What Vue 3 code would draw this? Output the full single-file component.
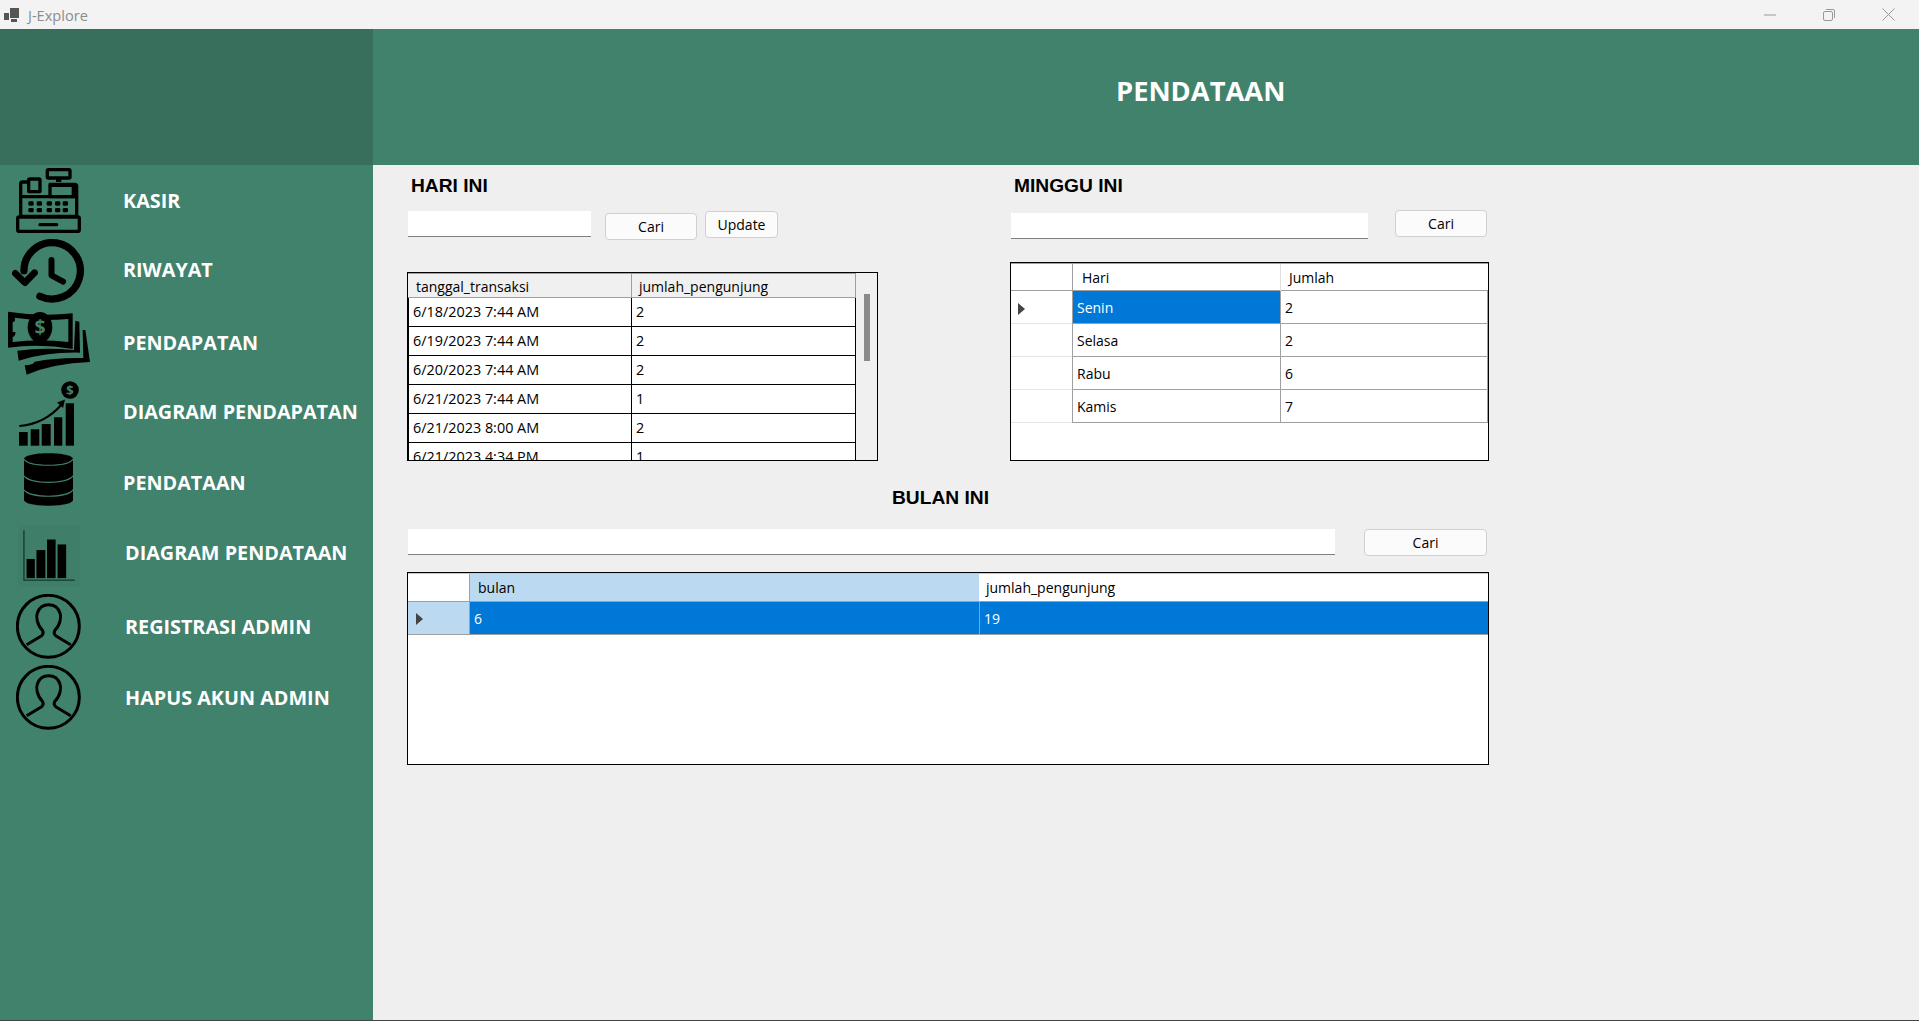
<template>
  <div class="window">
    <header class="titlebar">
      <svg class="app-icon" viewBox="0 0 15 14" width="15" height="14">
        <rect x="0" y="5" width="5" height="7" fill="#555" />
        <rect x="6" y="0" width="9" height="10" fill="#555" />
        <rect x="7" y="11" width="6" height="3" fill="#555" />
      </svg>
      <span class="app-name">J-Explore</span>
      <div class="controls">
        <svg viewBox="0 0 12 12" width="12" height="12"><path d="M0 6h12" stroke="#999" fill="none" /></svg>
        <svg viewBox="0 0 12 12" width="12" height="12">
          <rect x="0.5" y="2.5" width="9" height="9" rx="1.5" stroke="#999" fill="none" />
          <path d="M3 0.5h7a1.5 1.5 0 0 1 1.5 1.5v7" stroke="#999" fill="none" />
        </svg>
        <svg viewBox="0 0 13 13" width="13" height="13"><path d="M0.5 0.5l12 12M12.5 0.5l-12 12" stroke="#999" fill="none" /></svg>
      </div>
    </header>

    <div class="body">
      <aside class="sidebar">
        <div class="logo-block"></div>
        <nav class="menu">
          <div v-for="item in menu" :key="item.label" class="menu-item" :class="item.cls">
            <div class="menu-icon">
              <!-- kasir -->
              <svg v-if="item.icon === 'cash'" viewBox="0 0 195 195" width="65" height="65">
                <g fill="none" stroke="#000" stroke-width="10" stroke-linejoin="round">
                  <rect x="94" y="5" width="68" height="25" rx="3" />
                  <rect x="38" y="33" width="34" height="38" rx="3" />
                  <path d="M38 42h-18a6 6 0 0 0-6 6v97h168v-90a6 6 0 0 0-6-6h-78" />
                  <path d="M14 86h168" />
                  <rect x="102" y="52" width="70" height="34" />
                  <rect x="5" y="147" width="185" height="43" rx="5" />
                </g>
                <rect x="120" y="30" width="16" height="12" />
                <rect x="67" y="165" width="60" height="10" rx="5" />
                <g>
                  <rect v-for="k in keys" :key="k.id" :x="k.x" :y="k.y" width="16" height="13" rx="4" />
                </g>
              </svg>
              <!-- riwayat -->
              <svg v-else-if="item.icon === 'history'" viewBox="36 717 220 195" width="73" height="65">
                <g fill="none" stroke="#000" stroke-linecap="round" stroke-linejoin="round">
                  <path d="M120 889 A 85 85 0 1 0 72 812" stroke-width="22" />
                  <path d="M46 820 L75 848 L104 818" stroke-width="20" />
                  <path d="M155 780 V826 L190 845" stroke-width="18" />
                </g>
              </svg>
              <!-- pendapatan -->
              <svg v-else-if="item.icon === 'money'" viewBox="24 930 246 195" width="82" height="65">
                <path d="M24 935 Q120 950 218 940 V1047 Q120 1030 24 1043Z" />
                <path fill="#41826c" d="M44 953 Q120 965 205 957 V1026 Q120 1016 38 1026 V1012 Q48 1006 46 996 H38 V966 Q48 966 44 953Z" />
                <ellipse cx="120" cy="982" rx="37" ry="46" />
                <text x="120" y="1002" text-anchor="middle" class="coin-sign big">$</text>
                <path d="M52 1052 Q130 1042 222 1050 L226 962 L238 965 L240 1058 Q140 1056 56 1082Z" />
                <path d="M74 1096 Q100 1095 104 1085 Q170 1072 250 1074 L248 990 L256 990 L270 1086 Q160 1090 80 1124Z" />
              </svg>
              <!-- diagram pendapatan -->
              <svg v-else-if="item.icon === 'growth'" viewBox="19 381 60 65" width="60" height="65">
                <rect x="19" y="432" width="8.7" height="13.7" />
                <rect x="30.7" y="429.3" width="8.6" height="16.4" />
                <rect x="41.7" y="424" width="9" height="21.7" />
                <rect x="54" y="417.3" width="8.3" height="28.4" />
                <rect x="65.7" y="403.3" width="8.3" height="42.4" />
                <path d="M19.3 426 Q45 424 62 404" fill="none" stroke="#000" stroke-width="2" />
                <path d="M65 399.5 L57 402.5 L63 408Z" />
                <circle cx="70" cy="390" r="8.8" />
                <text x="70" y="394.5" text-anchor="middle" class="coin-sign small">$</text>
              </svg>
              <!-- pendataan -->
              <svg v-else-if="item.icon === 'database'" viewBox="72 160 148 158" width="49" height="53">
                <path d="M72 178 C72 154 220 154 220 178 V300 C220 324 72 324 72 300Z" />
                <g fill="none" stroke="#41826c" stroke-width="3.5">
                  <path d="M72 178 C90 202 202 202 220 178" />
                  <path d="M72 228 C90 254 202 254 220 228" />
                  <path d="M72 270 C90 296 202 296 220 270" />
                </g>
              </svg>
              <!-- diagram pendataan -->
              <svg v-else-if="item.icon === 'bars'" viewBox="52 375 188 186" width="62" height="62">
                <rect x="52" y="375" width="188" height="186" fill="#3f7e69" />
                <path d="M70 390V541H224" fill="none" stroke="#153a2d" stroke-width="4" />
                <rect x="78" y="477" width="25" height="58" />
                <rect x="108" y="450" width="27" height="85" />
                <rect x="140" y="418" width="26" height="117" />
                <rect x="172" y="433" width="26" height="102" />
              </svg>
              <!-- admin -->
              <svg v-else viewBox="48 583 195 195" width="65" height="65">
                <circle cx="145" cy="680" r="93" fill="none" stroke="#000" stroke-width="9" />
                <path d="M80 735 L125 708 Q132 702 128 693 C110 675 108 650 112 640 C118 622 132 615 146 615 C160 615 174 622 180 640 C184 650 182 675 164 693 Q160 702 167 708 L212 735" fill="none" stroke="#000" stroke-width="9" stroke-linejoin="round" />
              </svg>
            </div>
            <span class="menu-label">{{ item.label }}</span>
          </div>
        </nav>
      </aside>

      <main class="main">
        <div class="page-header"><h1>PENDATAAN</h1></div>

        <div class="content">
          <div class="top-row">
            <!-- hari ini -->
            <section class="panel panel-day">
              <h2>HARI INI</h2>
              <div class="tools">
                <div class="textbox"></div>
                <button class="btn btn-cari">Cari</button>
                <button class="btn btn-update">Update</button>
              </div>
              <div class="grid-box">
                <div class="day-grid">
                  <div class="day-head">
                    <div class="day-col1">tanggal_transaksi</div>
                    <div class="day-col2">jumlah_pengunjung</div>
                  </div>
                  <div v-for="row in dayRows" :key="row.date" class="day-row">
                    <div class="day-col1">{{ row.date }}</div>
                    <div class="day-col2">{{ row.total }}</div>
                  </div>
                </div>
                <div class="scroll-track"><div class="scroll-thumb"></div></div>
              </div>
            </section>

            <!-- minggu ini -->
            <section class="panel panel-week">
              <h2>MINGGU INI</h2>
              <div class="tools">
                <div class="textbox"></div>
                <button class="btn">Cari</button>
              </div>
              <div class="grid-box">
                <div class="week-head">
                  <div class="corner"></div>
                  <div class="week-col1">Hari</div>
                  <div class="week-col2">Jumlah</div>
                </div>
                <div v-for="(row, i) in weekRows" :key="row.day" class="week-row">
                  <div class="corner"><span v-if="i === 0" class="arrow"></span></div>
                  <div class="week-col1" :class="{ selected: i === 0 }">{{ row.day }}</div>
                  <div class="week-col2">{{ row.total }}</div>
                </div>
              </div>
            </section>
          </div>

          <!-- bulan ini -->
          <section class="panel-month">
            <h2>BULAN INI</h2>
            <div class="tools">
              <div class="textbox"></div>
              <button class="btn">Cari</button>
            </div>
            <div class="grid-box">
              <div class="month-head">
                <div class="corner"></div>
                <div class="month-col1 head-active">bulan</div>
                <div class="month-col2">jumlah_pengunjung</div>
              </div>
              <div class="month-row">
                <div class="corner corner-active"><span class="arrow"></span></div>
                <div class="month-col1">6</div>
                <div class="month-col2">19</div>
              </div>
            </div>
          </section>
        </div>
      </main>
    </div>
  </div>
</template>

<script setup>
const menu = [
  { label: 'KASIR', icon: 'cash', cls: 'm-cash' },
  { label: 'RIWAYAT', icon: 'history', cls: 'm-history' },
  { label: 'PENDAPATAN', icon: 'money', cls: 'm-money' },
  { label: 'DIAGRAM PENDAPATAN', icon: 'growth', cls: 'm-growth' },
  { label: 'PENDATAAN', icon: 'database', cls: 'm-database' },
  { label: 'DIAGRAM PENDATAAN', icon: 'bars', cls: 'm-bars' },
  { label: 'REGISTRASI ADMIN', icon: 'user', cls: 'm-user1' },
  { label: 'HAPUS AKUN ADMIN', icon: 'user', cls: 'm-user2' }
]

// cash register keypad, two rows of five
const keys = []
for (const y of [100, 120]) {
  for (const x of [37, 62, 92, 117, 140]) {
    keys.push({ id: `${x}-${y}`, x, y })
  }
}

const dayRows = [
  { date: '6/18/2023 7:44 AM', total: 2 },
  { date: '6/19/2023 7:44 AM', total: 2 },
  { date: '6/20/2023 7:44 AM', total: 2 },
  { date: '6/21/2023 7:44 AM', total: 1 },
  { date: '6/21/2023 8:00 AM', total: 2 },
  { date: '6/21/2023 4:34 PM', total: 1 }
]

const weekRows = [
  { day: 'Senin', total: 2 },
  { day: 'Selasa', total: 2 },
  { day: 'Rabu', total: 6 },
  { day: 'Kamis', total: 7 }
]
</script>

<style>
html, body { margin: 0; padding: 0; }
</style>

<style scoped>
.window {
  width: 1919px;
  height: 1021px;
  box-sizing: border-box;
  border-bottom: 1px solid #444;
  overflow: hidden;
  display: flex;
  flex-direction: column;
  background: #efefef;
  font-family: "Open Sans", "Noto Sans", sans-serif;
  font-size: 14px;
  color: #000;
}

/* title bar */
.titlebar {
  height: 29px;
  flex: none;
  display: flex;
  align-items: center;
  background: #f3f3f3;
  padding-left: 4px;
  box-sizing: border-box;
}
.app-name {
  margin-left: 9px;
  font-size: 14.6px;
  color: #8c8c8c;
}
.controls {
  margin-left: auto;
  display: flex;
  align-items: center;
  gap: 47px;
  padding-right: 24px;
}

.body {
  flex: 1;
  display: flex;
  min-height: 0;
}

/* sidebar */
.sidebar {
  width: 373px;
  flex: none;
  background: #41826c;
}
.logo-block {
  height: 136px;
  background: #386f5c;
}
.menu {
  padding-top: 3px;
}
.menu-item {
  display: flex;
  align-items: center;
  margin-top: 6px;
}
.menu-item:first-child { margin-top: 0; }
.m-database { margin-top: 7px; }
.m-bars { margin-top: 19px; }
.m-user1 { margin-top: 7px; }

.menu-icon {
  width: 123px;
  flex: none;
  display: flex;
}
.m-bars .menu-icon,
.m-user1 .menu-icon,
.m-user2 .menu-icon { width: 125px; }
.menu-icon svg { display: block; }
.m-cash svg, .m-user1 svg, .m-user2 svg { margin-left: 16px; }
.m-history svg { margin-left: 12px; }
.m-money svg { margin-left: 8px; }
.m-growth svg { margin-left: 19px; }
.m-database svg { margin-left: 24px; }
.m-bars svg { margin-left: 18px; }

.menu-label {
  color: #fff;
  font-size: 19.8px;
  font-weight: 700;
  white-space: nowrap;
}
.m-history .menu-label { margin-top: -4px; }
.m-growth .menu-label { margin-top: -4px; }
.m-database .menu-label { margin-top: 5px; }
.m-bars .menu-label { margin-top: -8px; }

.coin-sign {
  fill: #41826c;
  font-family: "Open Sans", sans-serif;
  font-weight: 700;
}
.coin-sign.big { font-size: 58px; }
.coin-sign.small { font-size: 13px; }

/* main area */
.main {
  flex: 1;
  min-width: 0;
}
.page-header {
  height: 136px;
  background: #41826c;
  display: flex;
  align-items: center;
  padding: 0 0 13px 743px;
  box-sizing: border-box;
}
.page-header h1 {
  margin: 0;
  color: #fff;
  font-size: 27.3px;
  font-weight: 700;
  line-height: 1;
}

.content {
  width: 1116px;
  padding-left: 34px;
}
.top-row {
  display: flex;
  gap: 132px;
}

h2 {
  margin: 0;
  font-family: "Liberation Sans", Arial, sans-serif;
  font-size: 19.2px;
  font-weight: 700;
  line-height: 22px;
}

.tools {
  display: flex;
  align-items: flex-start;
}
.textbox {
  box-sizing: border-box;
  background: #fff;
  border-bottom: 1px solid #808080;
  height: 26px;
}
.btn {
  box-sizing: border-box;
  height: 27px;
  width: 92px;
  padding: 0;
  background: #fbfbfb;
  border: 1px solid #d0d0d0;
  border-radius: 4px;
  font-family: inherit;
  font-size: 14px;
  color: #000;
}

.grid-box {
  box-sizing: border-box;
  border: 1px solid #000;
  background: #fff;
  overflow: hidden;
}

/* HARI INI */
.panel-day { width: 471px; }
.panel-day h2 { padding: 10px 0 0 4px; }
.panel-day .tools { margin-top: 14px; padding-left: 1px; }
.panel-day .textbox { width: 183px; }
.btn-cari { margin: 2px 0 0 14px; }
.btn-update { width: 73px; margin-left: 8px; }
.panel-day .grid-box {
  margin-top: 32px;
  height: 189px;
  display: flex;
}
.day-grid { width: 448px; flex: none; }
.day-head {
  display: grid;
  grid-template-columns: 224px 223px;
  height: 25px;
  box-sizing: border-box;
  background: #f0f0f0;
  border-bottom: 1px solid #a0a0a0;
  border-right: 1px solid #a0a0a0;
  border-top: 1px solid #a0a0a0;
  line-height: 25px;
}
.day-head .day-col1 { padding-left: 8px; border-right: 1px solid #a0a0a0; }
.day-head .day-col2 { padding-left: 7px; }
.day-row {
  display: grid;
  grid-template-columns: 223px 223px;
  height: 29px;
  box-sizing: border-box;
  background: #fff;
  border-bottom: 1px solid #000;
  border-left: 1px solid #000;
  border-right: 1px solid #000;
  font-size: 14.4px;
  line-height: 28px;
}
.day-row .day-col1 { padding-left: 4px; border-right: 1px solid #000; }
.day-row .day-col2 { padding-left: 4px; }
.scroll-track {
  flex: 1;
  background: #f0f0f0;
  padding: 21px 0 0 8px;
}
.scroll-thumb {
  width: 6px;
  height: 67px;
  background: #8a8a8a;
}

/* MINGGU INI */
.panel-week { width: 479px; }
.panel-week h2 { padding: 10px 0 0 4px; }
.panel-week .tools { margin-top: 13px; justify-content: space-between; padding: 0 2px 0 1px; }
.panel-week .textbox { width: 357px; margin-top: 3px; }
.panel-week .grid-box {
  margin-top: 23px;
  height: 199px;
}
.week-head, .week-row {
  display: grid;
  grid-template-columns: 61px 209px 1fr;
}
.corner { position: relative; }
.week-head {
  height: 28px;
  box-sizing: border-box;
  border-top: 1px solid #a0a0a0;
  border-bottom: 1px solid #a0a0a0;
  line-height: 26px;
}
.week-head .week-col1 { padding: 1px 0 0 9px; border-left: 1px solid #a0a0a0; border-right: 1px solid #e0e0e0; }
.week-head .week-col2 { padding: 1px 0 0 8px; }
.week-row {
  height: 33px;
  box-sizing: border-box;
  line-height: 30px;
}
.week-row .corner { border-bottom: 1px solid #e6e6e6; }
.week-row .week-col1 {
  padding: 2px 0 0 4px;
  border-left: 1px solid #a0a0a0;
  border-right: 1px solid #a0a0a0;
  border-bottom: 1px solid #a0a0a0;
}
.week-row .week-col2 {
  padding: 2px 0 0 4px;
  border-right: 1px solid #a0a0a0;
  border-bottom: 1px solid #a0a0a0;
}
.week-col1.selected {
  background: #0078d7;
  color: #fff;
}
.arrow {
  position: absolute;
  left: 7px;
  top: 12px;
  width: 0;
  height: 0;
  border-top: 6px solid transparent;
  border-bottom: 6px solid transparent;
  border-left: 7px solid #444;
}
.corner-active .arrow { left: 8px; top: 11px; }

/* BULAN INI */
.panel-month { width: 1082px; }
.panel-month h2 { padding: 26px 0 0 485px; }
.panel-month .tools {
  margin-top: 20px;
  justify-content: space-between;
  padding: 0 2px 0 1px;
}
.panel-month .textbox { width: 927px; }
.panel-month .btn { width: 123px; }
.panel-month .grid-box {
  margin-top: 16px;
  height: 193px;
}
.month-head, .month-row {
  display: grid;
  grid-template-columns: 61px 510px 1fr;
}
.month-head {
  height: 29px;
  box-sizing: border-box;
  border-top: 1px solid #c8c8c8;
  border-bottom: 1px solid #a0a0a0;
  line-height: 27px;
}
.month-head .month-col1 { padding-left: 8px; border-left: 1px solid #a0a0a0; }
.month-head .month-col2 { padding-left: 7px; }
.head-active { background: #bbdaf2; }
.month-row {
  height: 33px;
  box-sizing: border-box;
  background: #0078d7;
  color: #fff;
  line-height: 30px;
  border-bottom: 1px solid #a0a0a0;
}
.month-row .month-col1 { padding: 2px 0 0 4px; border-left: 1px solid #a0a0a0; }
.month-row .month-col2 { padding: 2px 0 0 4px; border-left: 1px solid #a0a0a0; }
.corner-active { background: #bbdaf2; }
</style>
